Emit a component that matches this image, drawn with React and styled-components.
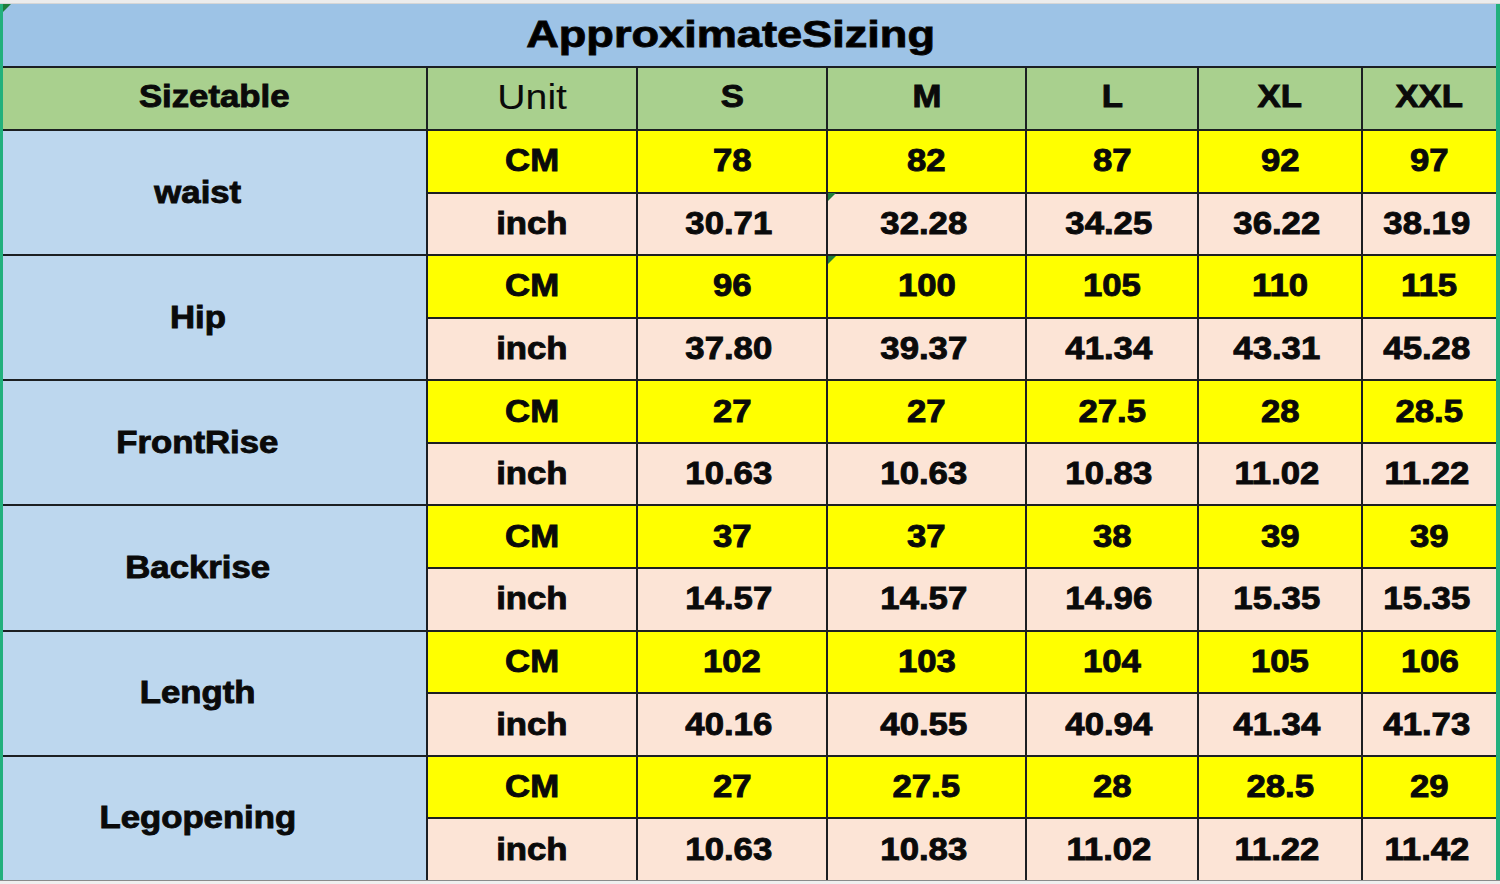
import styled, { createGlobalStyle } from "styled-components";

const sizes = ["S", "M", "L", "XL", "XXL"];

const measures = [
    { name: "waist", cm: ["78", "82", "87", "92", "97"], inch: ["30.71", "32.28", "34.25", "36.22", "38.19"] },
    { name: "Hip", cm: ["96", "100", "105", "110", "115"], inch: ["37.80", "39.37", "41.34", "43.31", "45.28"] },
    { name: "FrontRise", cm: ["27", "27", "27.5", "28", "28.5"], inch: ["10.63", "10.63", "10.83", "11.02", "11.22"] },
    { name: "Backrise", cm: ["37", "37", "38", "39", "39"], inch: ["14.57", "14.57", "14.96", "15.35", "15.35"] },
    { name: "Length", cm: ["102", "103", "104", "105", "106"], inch: ["40.16", "40.55", "40.94", "41.34", "41.73"] },
    { name: "Legopening", cm: ["27", "27.5", "28", "28.5", "29"], inch: ["10.63", "10.83", "11.02", "11.22", "11.42"] },
];

const GlobalStyle = createGlobalStyle`
    html, body {
        margin: 0;
        padding: 0;
        background: #f0f0f0;
    }
    body {
        font-family: "Liberation Sans", Arial, sans-serif;
    }
`;

function App() {
    return (
        <>
            <GlobalStyle />
            <Sheet>
                <TopStrip />
                <Frame>
                    <Table>
                        <Title>
                            <Wide $scale={1.22}>ApproximateSizing</Wide>
                        </Title>
                        <HeadCell>
                            <Wide>Sizetable</Wide>
                        </HeadCell>
                        <HeadCell $plain>
                            <Wide>Unit</Wide>
                        </HeadCell>
                        {sizes.map((s) => (
                            <HeadCell key={s}>
                                <Wide>{s}</Wide>
                            </HeadCell>
                        ))}
                        {measures.map((m) => (
                            <Group key={m.name} m={m} />
                        ))}
                    </Table>
                    <Marker style={{ left: 0, top: 0 }} />
                    <Marker style={{ left: 825, top: 189 }} />
                    <Marker style={{ left: 825, top: 252 }} />
                </Frame>
                <BottomStrip />
            </Sheet>
        </>
    );
}

function Group({ m }) {
    return (
        <>
            <Label>
                <Wide $shift={-17}>{m.name}</Wide>
            </Label>
            <Cell $tone="cm">
                <Wide>CM</Wide>
            </Cell>
            {m.cm.map((v, i) => (
                <Cell key={"c" + i} $tone="cm">
                    <Wide>{v}</Wide>
                </Cell>
            ))}
            <Cell $tone="inch">
                <Wide>inch</Wide>
            </Cell>
            {m.inch.map((v, i) => (
                <Cell key={"i" + i} $tone="inch">
                    <Wide $shift={-3}>{v}</Wide>
                </Cell>
            ))}
        </>
    );
}

const Sheet = styled.div`
    width: 1500px;
    height: 884px;
    display: flex;
    flex-direction: column;
    overflow: hidden;
`;

const TopStrip = styled.div`
    height: 4px;
    background: #ececec;
    border-bottom: 1px solid #d6d6d6;
    box-sizing: border-box;
`;

const BottomStrip = styled.div`
    flex: 1;
    background: #efefef;
    border-top: 1px solid #8a8a8a;
`;

const Frame = styled.div`
    position: relative;
    height: 876px;
    border-left: 3px solid #22b07c;
    border-right: 4px solid #22b07c;
`;

const Table = styled.div`
    display: grid;
    height: 100%;
    grid-template-columns: 423px 208px 188px 197px 170px 162px 133px;
    grid-template-rows: 62px 61px repeat(12, 1fr);
    gap: 2px;
    background: #1c1f22;
`;

const Wide = styled.span`
    display: inline-block;
    transform: translateX(${(p) => p.$shift || 0}px) scaleX(${(p) => p.$scale || 1.12});
    -webkit-text-stroke: 0.9px #0a0a0a;
`;

const Title = styled.div`
    grid-column: 1 / -1;
    background: #9dc3e6;
    display: flex;
    align-items: center;
    justify-content: center;
    padding-right: 38px;
    font-size: 37px;
    font-weight: 700;
    color: #000;
`;

const HeadCell = styled.div`
    background: #a9d08e;
    display: flex;
    align-items: center;
    justify-content: center;
    font-size: ${(p) => (p.$plain ? "35px" : "31px")};
    font-weight: ${(p) => (p.$plain ? 400 : 700)};
    color: #0a0a0a;
    padding-bottom: 4px;
    & > span {
        -webkit-text-stroke: ${(p) => (p.$plain ? "0" : "0.9px #0a0a0a")};
    }
`;

const Label = styled.div`
    grid-row: span 2;
    background: #bdd7ee;
    display: flex;
    align-items: center;
    justify-content: center;
    font-size: 31px;
    font-weight: 700;
    color: #0a0a0a;
`;

const Cell = styled.div`
    background: ${(p) => (p.$tone === "cm" ? "#ffff00" : "#fce4d6")};
    display: flex;
    align-items: center;
    justify-content: center;
    font-size: 31px;
    font-weight: 700;
    color: #0a0a0a;
`;

const Marker = styled.div`
    position: absolute;
    width: 0;
    height: 0;
    border-top: 8px solid #1e7e3a;
    border-right: 8px solid transparent;
`;

export default App;
